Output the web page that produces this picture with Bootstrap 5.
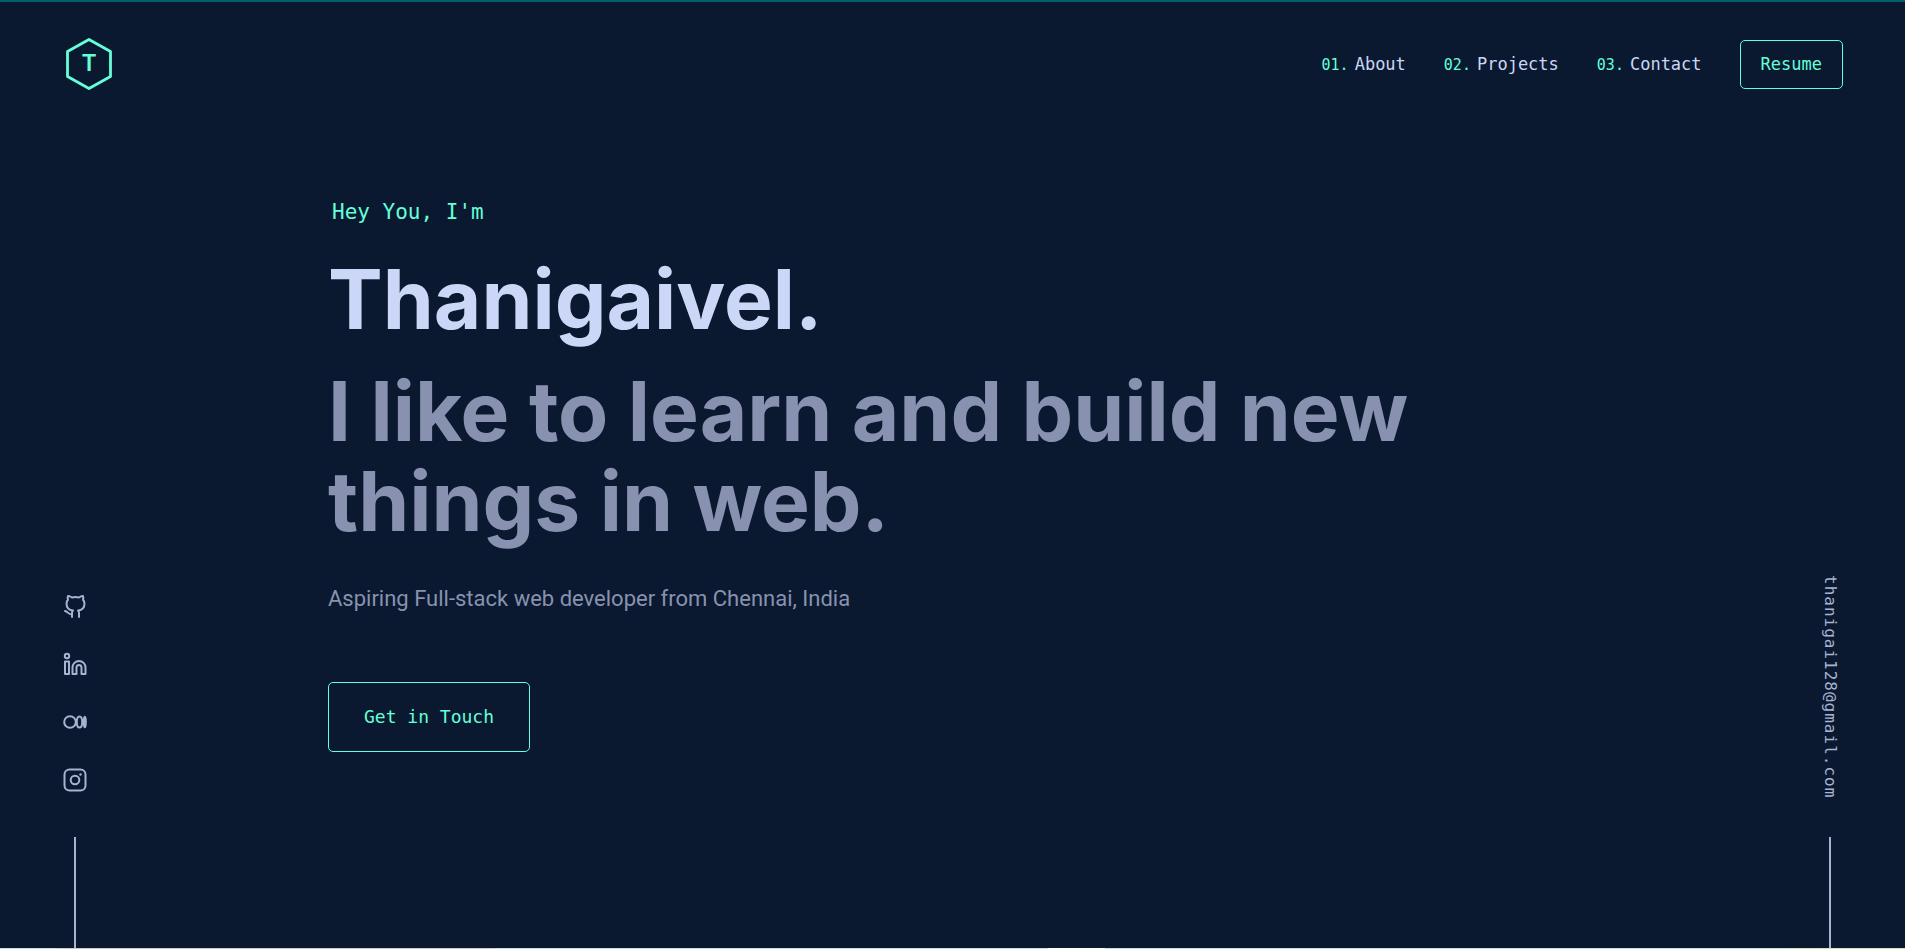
<!DOCTYPE html>
<html lang="en">
<head>
<meta charset="utf-8">
<meta name="viewport" content="width=device-width, initial-scale=1">
<title>Thanigaivel</title>
<link href="https://cdn.jsdelivr.net/npm/bootstrap@5.3.0/dist/css/bootstrap.min.css" rel="stylesheet">
<style>
:root { --navy: #0a192f; --mint: #64ffda; --slate: #8892b0; --light: #a8b2d1; --pale: #ccd6f6; --mono: "DejaVu Sans Mono", monospace; }
body { background: var(--navy); color: var(--slate); font-family: Inter, sans-serif; border-top: 2px solid #02606c; }
.strip { height: 1px; background: linear-gradient(to right, #c5dfe3 3%, #cfc8ce 3%, #cfc8ce 26%, #c5dfe3 26%, #c5dfe3 55%, #ffffff 55%, #ffffff 58%, #c5dfe3 58%, #c5dfe3 92%, #d3e6b8 95%); }
.site-nav { padding: 34px 62px 0 64px; }
.mono { font-family: var(--mono); }
.site-nav a { font-size: 17px; line-height: 24px; color: var(--pale); text-decoration: none; }
.site-nav .num { font-size: 15px; color: var(--mint); margin-right: 6px; }
.menu { gap: 38px; }
.btn-mint { --bs-btn-color: var(--mint); --bs-btn-border-color: var(--mint); --bs-btn-hover-color: var(--mint); --bs-btn-hover-bg: #112f45; --bs-btn-hover-border-color: var(--mint); --bs-btn-border-radius: 5px; font-family: var(--mono); }
.btn-resume { padding: 11px 20px 12px; --bs-btn-font-size: 17px; --bs-btn-line-height: 24px; }
.btn-touch { padding: 20px 35px; --bs-btn-font-size: 18px; --bs-btn-line-height: 28px; margin-top: 69px; }
.rail { width: 24px; color: var(--light); }
.rail a { color: inherit; text-decoration: none; }
.rail svg { display: block; }
.rail::after { content: ""; width: 2px; height: 111px; background: var(--light); }
.rails { padding: 0 63px; }
.icons { gap: 34px; margin-bottom: 45px; }
.mail { writing-mode: vertical-rl; font-size: 16px; line-height: 24px; letter-spacing: 1px; margin-bottom: 39px; }
.hero { padding-left: 241px; padding-top: 108px; max-width: 1440px; }
.hello { font-size: 21px; line-height: 28px; color: var(--mint); margin: 0 0 29px 4px; }
h1, h2 { font-size: 82px; line-height: 90px; font-weight: 700; margin: 0; }
h1 { color: var(--pale); margin-bottom: 22px; }
.about-line { font-family: Roboto, sans-serif; font-size: 22px; line-height: 28px; margin: 38px 0 0; }
</style>
</head>
<body class="min-vh-100 d-flex flex-column">
<header class="site-nav d-flex align-items-start justify-content-between">
  <a href="#" aria-label="Home">
    <svg width="50" height="54" viewBox="0 0 50 54" fill="none" stroke="#64ffda" stroke-width="2.800" stroke-linejoin="round"><path d="M25 3.500 46.500 15.500V40.500L25 52.500 3.500 40.500V15.500Z"/><text x="25" y="35" text-anchor="middle" font-family="Inter, sans-serif" font-size="23" font-weight="600" fill="#64ffda" stroke="none">T</text></svg>
  </a>
  <nav class="menu mono d-flex align-items-center mt-1">
    <a href="#about"><span class="num">01.</span>About</a>
    <a href="#projects"><span class="num">02.</span>Projects</a>
    <a href="#contact"><span class="num">03.</span>Contact</a>
    <button type="button" class="btn btn-mint btn-resume">Resume</button>
  </nav>
</header>
<div class="rails d-flex flex-grow-1 justify-content-between">
  <aside class="rail d-flex flex-column align-items-center justify-content-end flex-shrink-0">
    <div class="icons d-flex flex-column">
      <a href="#" aria-label="GitHub"><svg width="24" height="24" viewBox="0 0 24 24" fill="none" stroke="currentColor" stroke-width="2" stroke-linecap="round" stroke-linejoin="round"><path d="M16 23v-3.870a3.370 3.370 0 0 0-.94-2.610c3.140-.35 6.440-1.540 6.440-7A5.440 5.440 0 0 0 20 5.770 5.070 5.070 0 0 0 19.910 2S18.730 1.650 16 3.480a13.380 13.380 0 0 0-7 0C6.270 1.650 5.090 2 5.090 2A5.070 5.070 0 0 0 5 5.770a5.440 5.440 0 0 0-1.500 3.780c0 5.420 3.300 6.610 6.440 7A3.370 3.370 0 0 0 9 19.130V23M9 20.500c-4 0-4-3-7-3.500"/></svg></a>
      <a href="#" aria-label="LinkedIn"><svg width="24" height="24" viewBox="0 0 24 24" fill="none" stroke="currentColor" stroke-width="2" stroke-linejoin="round"><circle cx="4" cy="4" r="2.200"/><path d="M2 9.500h4V22H2ZM9.500 22v-6.500a6.500 6.500 0 0 1 13 0V22h-4v-6.500a2.500 2.500 0 0 0-5 0V22Z"/></svg></a>
      <a href="#" aria-label="Medium"><svg width="24" height="24" viewBox="0 0 24 24" fill="none" stroke="currentColor" stroke-width="2"><circle cx="7" cy="12" r="5.800"/><ellipse cx="16.500" cy="12" rx="2.700" ry="5.600"/><ellipse cx="21.800" cy="12" rx="1" ry="5.300"/></svg></a>
      <a href="#" aria-label="Instagram"><svg width="24" height="24" viewBox="0 0 24 24" fill="none" stroke="currentColor" stroke-width="2"><rect x="1.500" y="1.500" width="21" height="21" rx="5"/><circle cx="12" cy="12" r="4.300"/><circle cx="17.500" cy="6.500" r="1.200" fill="currentColor" stroke="none"/></svg></a>
    </div>
  </aside>
  <main class="hero flex-grow-1 me-auto">
    <p class="hello mono">Hey You, I'm</p>
    <h1>Thanigaivel.</h1>
    <h2>I like to learn and build new things in web.</h2>
    <p class="about-line">Aspiring Full-stack web developer from Chennai, India</p>
    <button type="button" class="btn btn-mint btn-touch">Get in Touch</button>
  </main>
  <aside class="rail d-flex flex-column align-items-center justify-content-end flex-shrink-0">
    <a class="mail mono" href="mailto:thanigai128@gmail.com">thanigai128@gmail.com</a>
  </aside>
</div>
<div class="strip"></div>
<script src="https://cdn.jsdelivr.net/npm/bootstrap@5.3.0/dist/js/bootstrap.bundle.min.js"></script>
</body>
</html>
